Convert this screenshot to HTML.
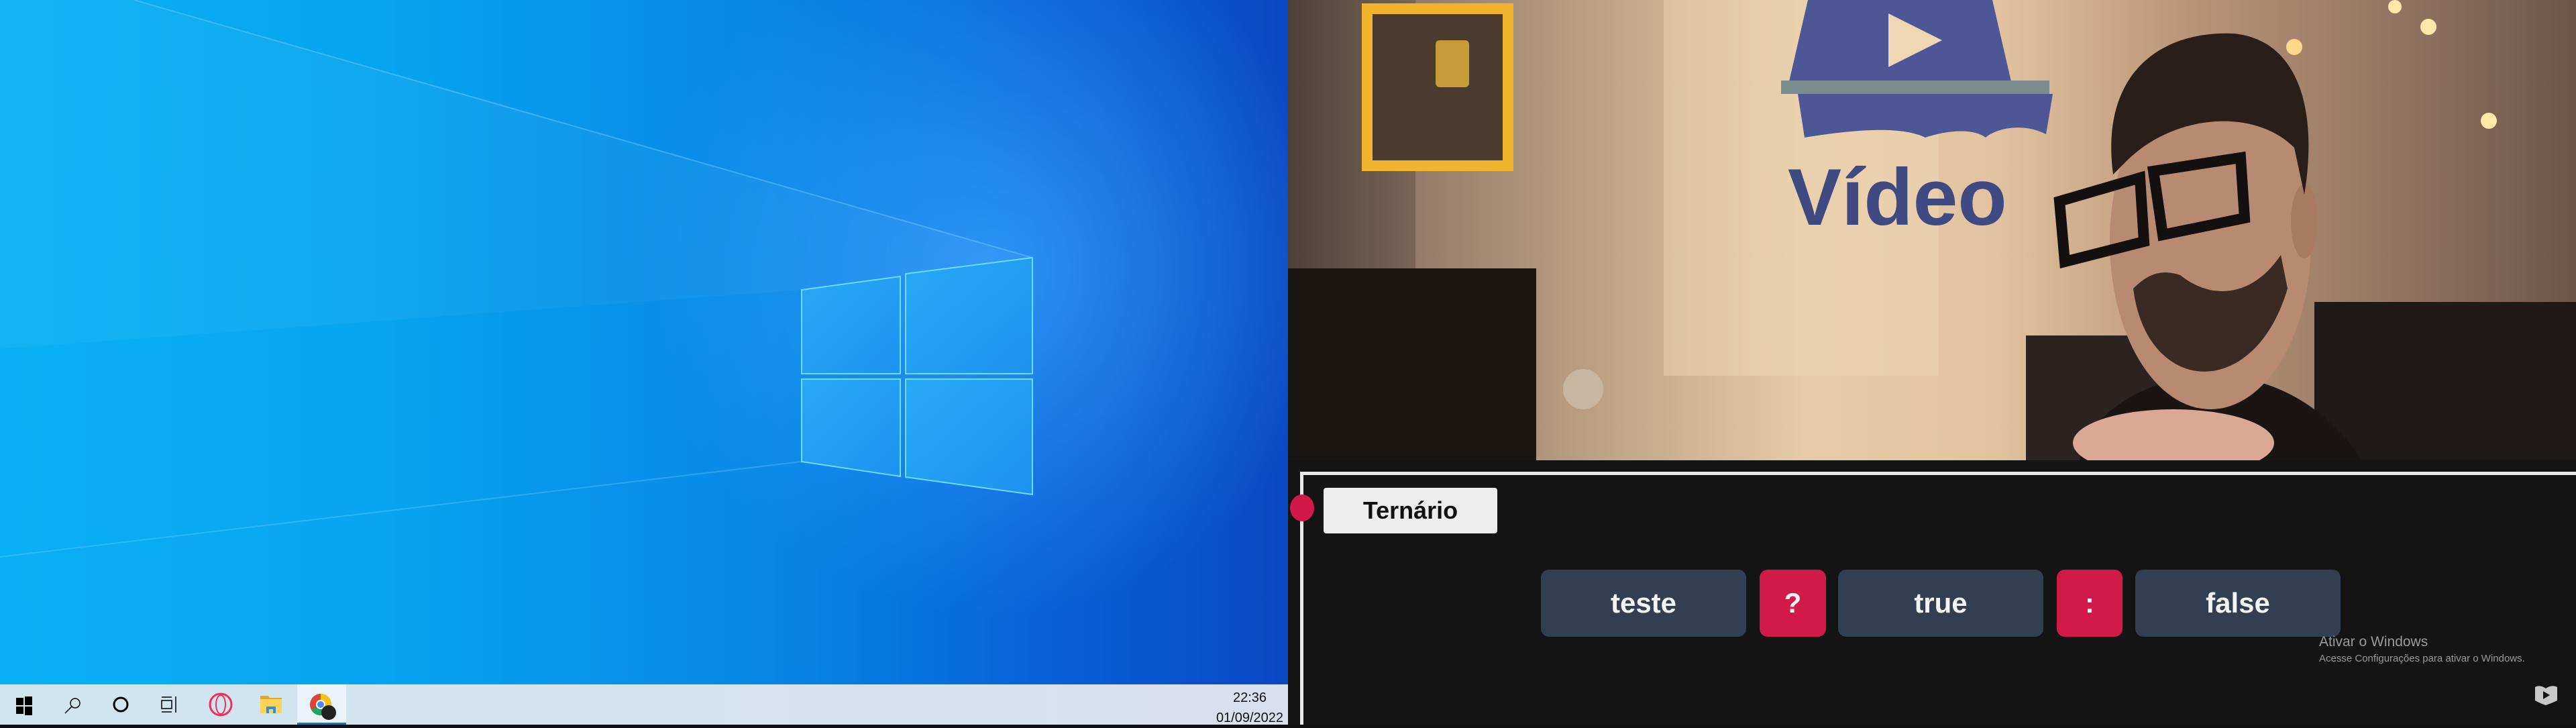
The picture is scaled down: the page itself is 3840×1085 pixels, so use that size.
<!DOCTYPE html>
<html><head><meta charset="utf-8"><style>
html,body{margin:0;padding:0;width:3840px;height:1080px;overflow:hidden;background:#111;}
*{box-sizing:border-box}
.abs{position:absolute}
#desk{left:0;top:0;width:1920px;height:1020px;background:linear-gradient(90deg,#0ab0f5 0%,#08a4ef 30%,#0787e6 60%,#0763db 80%,#0a48c4 100%);overflow:hidden}
#task{left:0;top:1020px;width:1920px;height:60px;background:linear-gradient(90deg,#cfe6ef,#d6e3ef 70%,#dadff0)}
#video{left:1920px;top:0;width:1920px;height:686px;overflow:hidden;background:linear-gradient(90deg,#5e4a3e 0%,#957b68 10%,#c0a488 25%,#e6cba8 40%,#e2c39f 55%,#b89478 70%,#957763 85%,#6d5648 100%)}
#panel{left:1920px;top:686px;width:1920px;height:394px;background:#141414}
.btn{position:absolute;top:849px;height:100px;border-radius:12px;background:#323f52;color:#f4f4f4;font:bold 42px "Liberation Sans",sans-serif;display:flex;align-items:center;justify-content:center}
.red{background:#d11a47}
</style></head><body>
<div id="desk" class="abs">
<svg width="1920" height="1020" style="position:absolute;left:0;top:0">
<defs>
<radialGradient id="glow" cx="1480" cy="400" r="520" gradientUnits="userSpaceOnUse"><stop offset="0" stop-color="#3aa8ff" stop-opacity=".7"/><stop offset="1" stop-color="#3aa8ff" stop-opacity="0"/></radialGradient>
<linearGradient id="pane" x1="0" y1="0" x2="1" y2="1"><stop offset="0" stop-color="#27a9f6"/><stop offset="1" stop-color="#1e92f0"/></linearGradient>
</defs>
<rect width="1920" height="1020" fill="url(#glow)"/>
<polygon points="200,0 1539,384 1195,432 0,520 0,0" fill="#fff" opacity=".04"/>
<line x1="200" y1="0" x2="1539" y2="384" stroke="#7fd4ff" stroke-width="2" opacity=".4"/>
<line x1="0" y1="830" x2="1195" y2="688" stroke="#7fd4ff" stroke-width="2" opacity=".3"/>
<g fill="url(#pane)" stroke="#6fdcff" stroke-width="2">
<polygon points="1195,432 1342,412 1342,557 1195,557"/>
<polygon points="1350,408 1539,384 1539,557 1350,557"/>
<polygon points="1195,565 1342,565 1342,710 1195,688"/>
<polygon points="1350,565 1539,565 1539,737 1350,711"/>
</g>
</svg>
</div>
<div id="task" class="abs">
<svg width="1920" height="60" style="position:absolute;left:0;top:0">
<rect x="443" y="0" width="73" height="60" fill="#eaf3f8"/>
<rect x="443" y="57" width="73" height="3" fill="#0a78d6"/>
<g fill="#000"><rect x="24" y="20" width="11" height="11"/><rect x="37" y="18" width="11" height="13"/><rect x="24" y="33" width="11" height="11"/><rect x="37" y="33" width="11" height="13"/></g>
<circle cx="112" cy="28" r="7" fill="none" stroke="#000" stroke-width="1.5"/><line x1="107" y1="33" x2="97" y2="43" stroke="#000" stroke-width="1.5"/>
<circle cx="180" cy="30" r="10" fill="none" stroke="#000" stroke-width="3"/>
<g stroke="#000" stroke-width="1.5" fill="none"><rect x="241" y="24" width="15" height="12"/><path d="M241 19h15M241 41h15M262 18v24"/></g>
<ellipse cx="329" cy="30" rx="16" ry="16" fill="none" stroke="#f0305a" stroke-width="3"/><ellipse cx="329" cy="30" rx="7" ry="14" fill="none" stroke="#f0305a" stroke-width="2"/>
<path d="M388 17h12l2 3h18v23h-32z" fill="#e3a72b"/><rect x="388" y="22" width="32" height="21" fill="#ffd35a"/><path d="M397 43v-10h14v10h-4v-6h-6v6z" fill="#2e8de6"/>
<circle cx="478" cy="30" r="16" fill="#dd4436"/><path d="M478 30 L492 38 A16 16 0 0 1 464 38Z" fill="#1da462"/><path d="M478 30 L478 14 A16 16 0 0 1 492 38Z" fill="#f5c018"/><circle cx="478" cy="30" r="7" fill="#fff"/><circle cx="478" cy="30" r="5" fill="#4a89f2"/>
<circle cx="490" cy="42" r="11" fill="#222"/>
</svg>
<div class="abs" style="left:1800px;top:5px;width:126px;text-align:center;font:20px 'Liberation Sans',sans-serif;color:#111;line-height:30px">22:36<br>01/09/2022</div>
</div>
<div id="video" class="abs">
<div class="abs" style="left:0;top:0;width:190px;height:686px;background:linear-gradient(90deg,#4e4038,#7a6556)"></div>
<div class="abs" style="left:110px;top:5px;width:226px;height:250px;border:16px solid #f1b42c;background:#4a3b2e"></div>
<div class="abs" style="left:220px;top:60px;width:50px;height:70px;background:#c79a3a;border-radius:6px"></div>
<div class="abs" style="left:0;top:400px;width:370px;height:286px;background:#1c1612"></div>
<div class="abs" style="left:560px;top:0;width:410px;height:560px;background:#f0d9b6;opacity:.45"></div>
<svg class="abs" style="left:0;top:0" width="1920" height="686">
<polygon points="775,0 1050,0 1080,130 745,130" fill="#4d5796"/>
<rect x="735" y="120" width="400" height="20" fill="#7b8c8e"/>
<polygon points="895,20 975,60 895,100" fill="#f0d8b2"/>
<path d="M760 140h380l-10 60c-40-20-80-5-90 5-20-15-60-10-90 0-30-15-90-15-180 0z" fill="#4d5796"/>
<text x="745" y="335" font-family="Liberation Sans,sans-serif" font-size="120" fill="#3f4a82" font-weight="bold">Vídeo</text>
<rect x="1530" y="450" width="390" height="236" fill="#1f1a17"/>
<rect x="1100" y="500" width="260" height="186" fill="#2a2320"/>
<path d="M1180 686 C1200 600 1300 560 1380 560 C1480 560 1560 620 1600 686Z" fill="#1a1512"/>
<ellipse cx="1375" cy="360" rx="150" ry="250" fill="#b98a72"/>
<ellipse cx="1515" cy="330" rx="20" ry="55" fill="#a87a62"/>
<path d="M1230 260 C1210 110 1300 45 1410 50 C1510 60 1535 170 1515 290 L1500 220 C1440 160 1320 170 1250 240Z" fill="#2a1e18"/>
<path d="M1260 430 C1280 590 1440 600 1490 430 L1480 380 C1440 440 1380 450 1330 410 C1300 400 1280 410 1260 430Z" fill="#3a2a22"/>
<path d="M1150 300 l120 -35 l6 95 l-118 30z M1290 255 l130 -20 l6 90 l-122 25z" fill="none" stroke="#141010" stroke-width="16"/>
<ellipse cx="1320" cy="660" rx="150" ry="50" fill="#d9a996"/>
<circle cx="1700" cy="40" r="12" fill="#ffe8a8"/><circle cx="1650" cy="10" r="10" fill="#ffe8a8"/><circle cx="1790" cy="180" r="12" fill="#ffe8a8"/><circle cx="1500" cy="70" r="12" fill="#ffd88a"/>
<circle cx="440" cy="580" r="30" fill="#c9b6a0"/>
</svg>
</div>
<div id="panel" class="abs"></div>
<div class="abs" style="left:1941px;top:703px;width:1899px;height:5px;background:#e8e8e8"></div>
<div class="abs" style="left:1938px;top:703px;width:5px;height:377px;background:#e8e8e8"></div>
<div class="abs" style="left:1923px;top:737px;width:36px;height:40px;border-radius:50%;background:#d0184a"></div>
<div class="abs" style="left:1973px;top:727px;width:259px;height:68px;background:#ececec;border-radius:4px;font:bold 36px 'Liberation Sans',sans-serif;color:#111;display:flex;align-items:center;justify-content:center">Ternário</div>
<div class="btn" style="left:2297px;width:306px">teste</div>
<div class="btn red" style="left:2623px;width:99px">?</div>
<div class="btn" style="left:2740px;width:306px">true</div>
<div class="btn red" style="left:3066px;width:98px">:</div>
<div class="btn" style="left:3183px;width:306px">false</div>
<div class="abs" style="left:3457px;top:945px;font:21px 'Liberation Sans',sans-serif;color:#9a9a9a">Ativar o Windows</div>
<div class="abs" style="left:3457px;top:973px;font:15px 'Liberation Sans',sans-serif;color:#9a9a9a">Acesse Configurações para ativar o Windows.</div>
<svg class="abs" style="left:3776px;top:1020px" width="40" height="32"><path d="M3 4 Q10 0 19 6 Q28 0 36 4 L36 24 Q28 28 19 31 Q10 28 3 24Z" fill="#c8c8c8"/><polygon points="15,10 25,16 15,22" fill="#141414"/></svg>
</body></html>
